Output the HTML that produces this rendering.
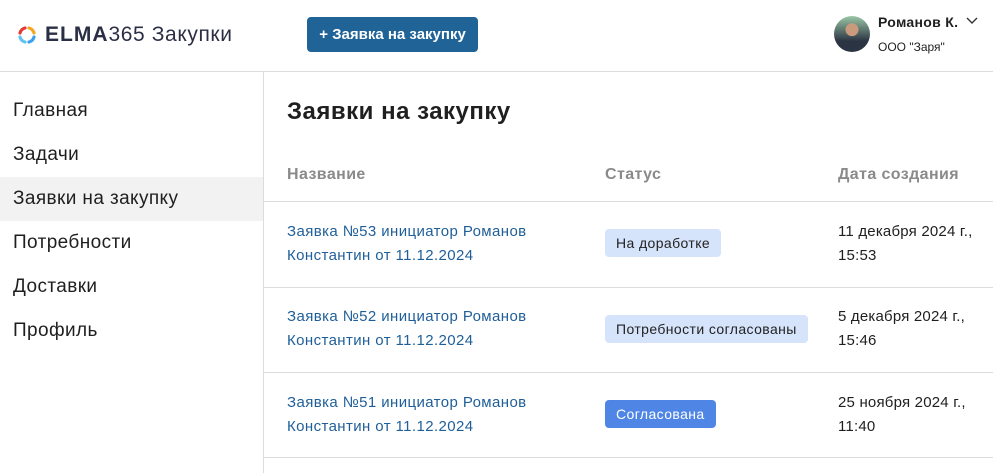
<!DOCTYPE html>
<html><head><meta charset="utf-8"><style>
*{margin:0;padding:0;box-sizing:border-box}
body{width:993px;height:473px;overflow:hidden;background:#fff;font-family:"Liberation Sans","DejaVu Sans",sans-serif;color:#1f1f1f;position:relative}
.hdr{position:absolute;left:0;top:0;width:993px;height:72px;border-bottom:1px solid #dcdcdc}
.logo{position:absolute;left:17px;top:23px;font-size:21px;color:#2a2f45;display:flex;align-items:center}
.logo b{font-weight:bold;letter-spacing:1px;margin-left:8px}
.logo span{letter-spacing:0.6px}
.btn{position:absolute;left:307px;top:17px;width:171px;height:35px;background:#1f6397;border-radius:4px;color:#fff;font-weight:bold;font-size:15px;line-height:35px;text-align:center}
.av{position:absolute;left:834px;top:16px;width:36px;height:36px;border-radius:50%;background:radial-gradient(circle at 50% 38%,#c99a7b 0 22%,transparent 23%),linear-gradient(#9bc7a6,#2b3442 70%);overflow:hidden}
.name{position:absolute;left:878px;top:14px;font-weight:bold;font-size:14px;letter-spacing:0.3px}
.org{position:absolute;left:878px;top:40px;font-size:12px}
.chev{position:absolute;left:966px;top:17px}
.side{position:absolute;left:0;top:72px;width:264px;height:401px;border-right:1px solid #dcdcdc}
.side div{height:44px;line-height:44px;padding-left:13px;font-size:19px;letter-spacing:0.4px}
.side .act{background:#f2f2f2}
h1{position:absolute;left:287px;top:98px;font-size:24px;font-weight:bold;color:#1f1f1f;letter-spacing:0.5px}
.row{position:absolute;left:264px;width:729px;border-bottom:1px solid #dcdcdc}
.th{position:absolute;top:166px;font-size:16px;font-weight:bold;color:#8a8a8a;letter-spacing:0.4px}
.lnk{position:absolute;left:287px;font-size:15px;line-height:24px;color:#1f5f99;letter-spacing:0.4px}
.dt{position:absolute;left:838px;font-size:15px;line-height:24px;color:#1f1f1f;letter-spacing:0.2px}
.bd{position:absolute;left:605px;height:28px;line-height:28px;border-radius:4px;background:#d6e4fb;font-size:14px;padding:0 11px;color:#222;letter-spacing:0.4px}
</style></head><body>
<div class="hdr">
 <div class="logo"><svg width="20" height="20" viewBox="0 0 20 20" fill="none" stroke-width="3.2" stroke-linecap="round"><path d="M3 8A7 7 0 0 1 8 3" stroke="#e53935"/><path d="M12 3A7 7 0 0 1 17 8" stroke="#f5a623"/><path d="M17 12A7 7 0 0 1 12 17" stroke="#3aa0f0"/><path d="M8 17A7 7 0 0 1 3 12" stroke="#5ec3f5"/></svg><b>ELMA</b><span>365 Закупки</span></div>
 <div class="btn">+ Заявка на закупку</div>
 <div class="av"></div>
 <div class="name">Романов К.</div>
 <div class="org">ООО "Заря"</div>
 <svg class="chev" width="12" height="8" viewBox="0 0 12 8"><path d="M1 1l5 5 5-5" stroke="#333" stroke-width="1.4" fill="none"/></svg>
</div>
<div class="side" style="padding-top:17px">
 <div>Главная</div><div>Задачи</div><div class="act">Заявки на закупку</div><div>Потребности</div><div>Доставки</div><div>Профиль</div>
</div>
<h1>Заявки на закупку</h1>
<div class="th" style="left:287px">Название</div>
<div class="th" style="left:605px">Статус</div>
<div class="th" style="left:838px">Дата создания</div>
<div class="row" style="top:150px;height:52px"></div>
<div class="row" style="top:202px;height:86px"></div>
<div class="row" style="top:288px;height:85px"></div>
<div class="row" style="top:373px;height:85px"></div>
<div class="lnk" style="top:220px">Заявка №53 инициатор Романов<br>Константин от 11.12.2024</div>
<div class="lnk" style="top:305px">Заявка №52 инициатор Романов<br>Константин от 11.12.2024</div>
<div class="lnk" style="top:391px">Заявка №51 инициатор Романов<br>Константин от 11.12.2024</div>
<div class="bd" style="top:229px">На доработке</div>
<div class="bd" style="top:315px">Потребности согласованы</div>
<div class="bd" style="top:400px;background:#4f86e6;color:#fff">Согласована</div>
<div class="dt" style="top:220px">11 декабря 2024 г.,<br>15:53</div>
<div class="dt" style="top:305px">5 декабря 2024 г.,<br>15:46</div>
<div class="dt" style="top:391px">25 ноября 2024 г.,<br>11:40</div>
</body></html>
